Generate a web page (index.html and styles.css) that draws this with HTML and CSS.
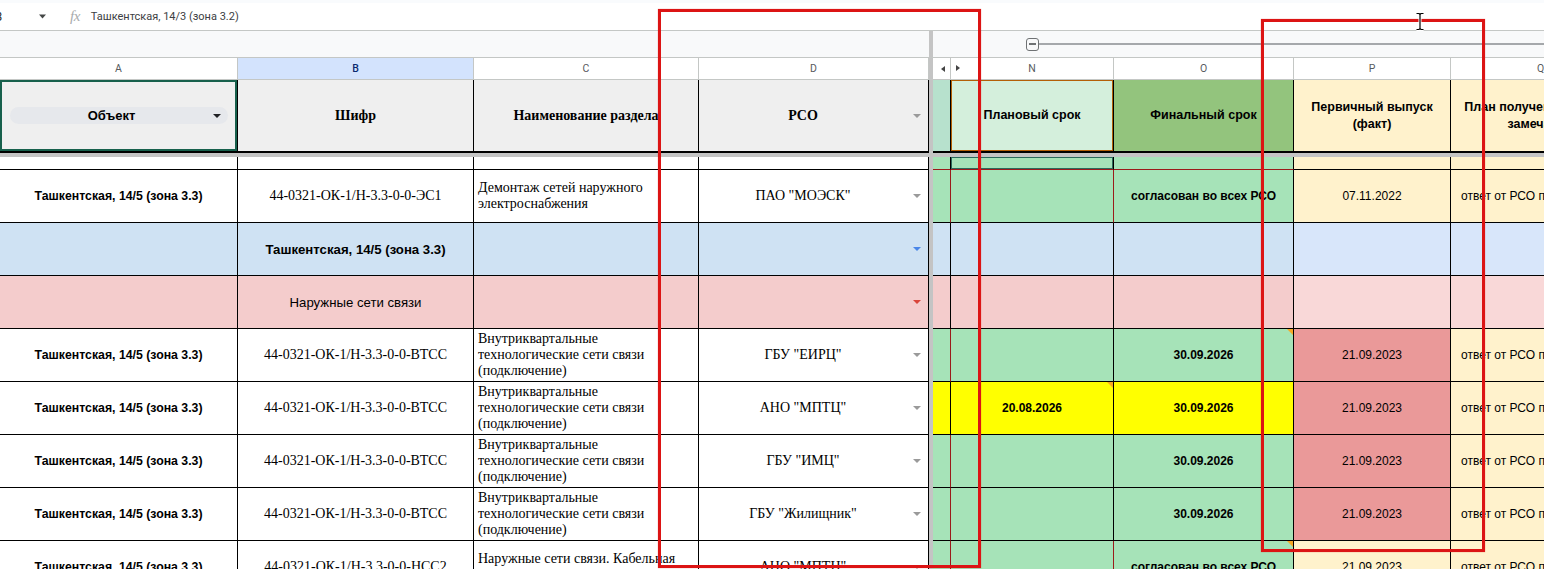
FILE: index.html
```html
<!DOCTYPE html>
<html lang="ru">
<head>
<meta charset="utf-8">
<title>Реестр согласований</title>
<link rel="stylesheet" href="styles.css">
</head>
<body>
<div class="top"></div>

<div class="fbar">
  <span class="name">B3</span>
  <svg class="caret" width="7" height="5" viewBox="0 0 7 5"><path d="M0 0.5h7L3.5 4.5z" fill="#444746"/></svg>
  <span class="fx">fx</span>
  <span class="ftext">Ташкентская, 14/3 (зона 3.2)</span>
</div>

<div class="sheet">
  <div class="grp">
    <div class="grp-left"></div>
    <div class="frz"></div>
    <div class="grp-right">
      <span class="collapse"><span class="minus"></span></span>
      <span class="grp-line"></span>
    </div>
  </div>

  <div class="row letters">
    <div class="l">A</div>
    <div class="l sel">B</div>
    <div class="l">C</div>
    <div class="l">D</div>
    <div class="frz"></div>
    <div class="l hid"><i class="tri-l"></i></div>
    <div class="l n-let"><i class="tri-r"></i>N</div>
    <div class="l">O</div>
    <div class="l">P</div>
    <div class="l">Q</div>
  </div>

  <div class="row head">
    <div class="c h h-a">
      <div class="chip"><span class="chip-t">Объект</span><i class="chip-dd"></i></div>
    </div>
    <div class="c h serif">Шифр</div>
    <div class="c h serif">Наименование раздела</div>
    <div class="c h serif d"><span class="dv">РСО</span><i class="dd"></i></div>
    <div class="frz"></div>
    <div class="c h-hid"></div>
    <div class="c h h-n">Плановый срок</div>
    <div class="c h h-o">Финальный срок</div>
    <div class="c h h-p">Первичный выпуск (факт)</div>
    <div class="c h h-q">План получения ответа /<br>замечаний</div>
  </div>

  <div class="frz-row"></div>

  <div class="row part">
    <div class="c"></div>
    <div class="c"></div>
    <div class="c"></div>
    <div class="c"></div>
    <div class="frz"></div>
    <div class="c g edge"></div>
    <div class="c g edge boxed"></div>
    <div class="c g edge"></div>
    <div class="c cream"></div>
    <div class="c cream"></div>
  </div>

  <div class="row">
    <div class="c a">Ташкентская, 14/5 (зона 3.3)</div>
    <div class="c b">44-0321-ОК-1/Н-3.3-0-0-ЭС1</div>
    <div class="c t">Демонтаж сетей наружного электроснабжения</div>
    <div class="c d"><span class="dv">ПАО "МОЭСК"</span><i class="dd"></i></div>
    <div class="frz"></div>
    <div class="c g redr"></div>
    <div class="c g redr"></div>
    <div class="c g bold">согласован во всех РСО</div>
    <div class="c cream">07.11.2022</div>
    <div class="c cream q">ответ от РСО получен</div>
  </div>

  <div class="row">
    <div class="c blue"></div>
    <div class="c blue a lg">Ташкентская, 14/5 (зона 3.3)</div>
    <div class="c blue"></div>
    <div class="c blue d"><span class="dv"></span><i class="dd dd-blue"></i></div>
    <div class="frz"></div>
    <div class="c blue"></div>
    <div class="c blue"></div>
    <div class="c blue"></div>
    <div class="c blue2"></div>
    <div class="c blue2"></div>
  </div>

  <div class="row">
    <div class="c pink"></div>
    <div class="c pink sect">Наружные сети связи</div>
    <div class="c pink"></div>
    <div class="c pink d"><span class="dv"></span><i class="dd dd-red"></i></div>
    <div class="frz"></div>
    <div class="c pink"></div>
    <div class="c pink"></div>
    <div class="c pink"></div>
    <div class="c pink2"></div>
    <div class="c pink2"></div>
  </div>

  <div class="row">
    <div class="c a">Ташкентская, 14/5 (зона 3.3)</div>
    <div class="c b">44-0321-ОК-1/Н-3.3-0-0-ВТСС</div>
    <div class="c t">Внутриквартальные технологические сети связи (подключение)</div>
    <div class="c d"><span class="dv">ГБУ "ЕИРЦ"</span><i class="dd"></i></div>
    <div class="frz"></div>
    <div class="c g redr"></div>
    <div class="c g"></div>
    <div class="c g bold note">30.09.2026</div>
    <div class="c red">21.09.2023</div>
    <div class="c cream q">ответ от РСО получен</div>
  </div>

  <div class="row">
    <div class="c a">Ташкентская, 14/5 (зона 3.3)</div>
    <div class="c b">44-0321-ОК-1/Н-3.3-0-0-ВТСС</div>
    <div class="c t">Внутриквартальные технологические сети связи (подключение)</div>
    <div class="c d"><span class="dv">АНО "МПТЦ"</span><i class="dd"></i></div>
    <div class="frz"></div>
    <div class="c y"></div>
    <div class="c y bold note">20.08.2026</div>
    <div class="c y bold">30.09.2026</div>
    <div class="c red">21.09.2023</div>
    <div class="c cream q">ответ от РСО получен</div>
  </div>

  <div class="row">
    <div class="c a">Ташкентская, 14/5 (зона 3.3)</div>
    <div class="c b">44-0321-ОК-1/Н-3.3-0-0-ВТСС</div>
    <div class="c t">Внутриквартальные технологические сети связи (подключение)</div>
    <div class="c d"><span class="dv">ГБУ "ИМЦ"</span><i class="dd"></i></div>
    <div class="frz"></div>
    <div class="c g redr"></div>
    <div class="c g"></div>
    <div class="c g bold">30.09.2026</div>
    <div class="c red">21.09.2023</div>
    <div class="c cream q">ответ от РСО получен</div>
  </div>

  <div class="row">
    <div class="c a">Ташкентская, 14/5 (зона 3.3)</div>
    <div class="c b">44-0321-ОК-1/Н-3.3-0-0-ВТСС</div>
    <div class="c t">Внутриквартальные технологические сети связи (подключение)</div>
    <div class="c d"><span class="dv">ГБУ "Жилищник"</span><i class="dd"></i></div>
    <div class="frz"></div>
    <div class="c g redr"></div>
    <div class="c g"></div>
    <div class="c g bold">30.09.2026</div>
    <div class="c red">21.09.2023</div>
    <div class="c cream q">ответ от РСО получен</div>
  </div>

  <div class="row">
    <div class="c a">Ташкентская, 14/5 (зона 3.3)</div>
    <div class="c b">44-0321-ОК-1/Н-3.3-0-0-НСС2</div>
    <div class="c t">Наружные сети связи. Кабельная канализация</div>
    <div class="c d"><span class="dv">АНО "МПТЦ"</span><i class="dd"></i></div>
    <div class="frz"></div>
    <div class="c g redr"></div>
    <div class="c g redr"></div>
    <div class="c g bold note">согласован во всех РСО</div>
    <div class="c cream">21.09.2023</div>
    <div class="c cream q">ответ от РСО получен</div>
  </div>
</div>

<div class="mark mark-1"></div>
<div class="mark mark-2"></div>

<svg class="ibeam" width="10" height="19" viewBox="0 0 10 19">
  <path d="M1.5 1.5h2.5l1 1 1-1h2.5M5 2.5v14M1.5 17.5h2.5l1-1 1 1h2.5" fill="none" stroke="#fff" stroke-width="3"/>
  <path d="M1.5 1.5h2.5l1 1 1-1h2.5M5 2.5v14M1.5 17.5h2.5l1-1 1 1h2.5" fill="none" stroke="#000" stroke-width="1.2"/>
</svg>
</body>
</html>
```

FILE: styles.css
```css
* {
  box-sizing: border-box;
  margin: 0;
  padding: 0;
}

:root {
  --cols: 238px 236px 225px 230px 4px 18px 163px 180px 157px 180px;
  --green: #a6e3b8;
  --line: #000;
}

body {
  width: 1544px;
  height: 569px;
  overflow: hidden;
  position: relative;
  background: #fff;
  font-family: "Liberation Sans", Arial, sans-serif;
  color: #000;
}

/* toolbar strip and formula bar */
.top {
  height: 3px;
  background: #f9fbfd;
}

.fbar {
  height: 28px;
  border-bottom: 1px solid #c4c7c5;
  display: flex;
  align-items: center;
  font-family: Roboto, "Liberation Sans", sans-serif;
  font-size: 11px;
  color: #3c4043;
  white-space: nowrap;
}

.name {
  margin-left: -12px;
  width: 16px;
  font-size: 12px;
  color: #1f1f1f;
}

.caret {
  margin-left: 35px;
}

.fx {
  margin-left: 24px;
  font-family: "Liberation Serif", serif;
  font-style: italic;
  font-size: 15px;
  color: #a8abad;
  letter-spacing: -0.5px;
}

.ftext {
  margin-left: 11px;
}

/* sheet grid */
.sheet {
  width: 1630px;
}

.grp,
.row {
  display: grid;
  grid-template-columns: var(--cols);
}

.row {
  height: 53px;
}

.grp {
  height: 27px;
  background: #f8f9fa;
  border-bottom: 1px solid #c4c7c5;
}

.grp-left {
  grid-column: 1 / 5;
}

.grp-right {
  grid-column: 6 / 11;
  display: flex;
  align-items: center;
  padding-left: 93px;
}

.collapse {
  width: 13px;
  height: 13px;
  border: 1.5px solid #6f7274;
  border-radius: 3px;
  display: flex;
  align-items: center;
  justify-content: center;
  flex: none;
}

.minus {
  width: 7px;
  height: 1.5px;
  background: #6f7274;
}

.grp-line {
  flex: 1;
  height: 1.5px;
  background: #a5a8ab;
}

.frz {
  background: #c4c4c4;
}

.frz-row {
  height: 4px;
  background: #c4c4c4;
}

/* column letters */
.row.letters {
  height: 22px;
  background: #fff;
  border-bottom: 1px solid #c4c7c5;
}

.l {
  border-right: 1px solid #c4c7c5;
  display: flex;
  align-items: center;
  justify-content: center;
  font-family: Roboto, "Liberation Sans", sans-serif;
  font-size: 10.5px;
  color: #575a5e;
  position: relative;
}

.l.sel {
  background: #d3e3fd;
  color: #0b2a6f;
  font-weight: 500;
}

.l.hid {
  justify-content: flex-end;
  padding-right: 5px;
}

.tri-l,
.tri-r {
  width: 0;
  height: 0;
  border-top: 3.5px solid transparent;
  border-bottom: 3.5px solid transparent;
}

.tri-l {
  border-right: 4px solid #444;
}

.tri-r {
  border-left: 4px solid #444;
  position: absolute;
  left: 5px;
  top: 7px;
}

/* cells */
.c {
  border-right: 1px solid var(--line);
  border-bottom: 1px solid var(--line);
  display: flex;
  align-items: center;
  justify-content: center;
  text-align: center;
  overflow: hidden;
  position: relative;
  font-size: 12px;
}

.row.head {
  height: 73px;
}

.head .c {
  border-bottom: 2px solid #000;
}

.h {
  background: #efefef;
  font-weight: bold;
  font-size: 12.5px;
  line-height: 17px;
  padding: 0 10px;
}

.serif {
  font-family: "Liberation Serif", "Times New Roman", serif;
  font-size: 14px;
}

.h.d {
  padding: 0;
}

.h-a {
  padding: 0 9px 0 10px;
  box-shadow: inset 0 0 0 2px #17604c;
}

.chip {
  width: 100%;
  height: 17px;
  border-radius: 9px;
  background: #e6e8ec;
  display: flex;
  align-items: center;
}

.chip-t {
  flex: 1;
  text-align: center;
  font-size: 13px;
  font-weight: bold;
}

.chip-dd {
  width: 0;
  height: 0;
  border-left: 4px solid transparent;
  border-right: 4px solid transparent;
  border-top: 4.5px solid #202124;
  margin-right: 7px;
}

.h-hid {
  background: #b7e1cd;
}

.h-n {
  background: #d4efdc;
  box-shadow: inset 0 0 0 1px #b45f06;
}

.h-o {
  background: #93c47d;
}

.h-p,
.h-q {
  background: #fff2cc;
}

.h-q {
  padding: 0;
  white-space: nowrap;
}

.row.part {
  height: 13px;
}

.a {
  font-weight: bold;
  font-size: 12.3px;
}

.a.lg {
  font-size: 13.2px;
}

.b,
.t,
.d {
  font-family: "Liberation Serif", "Times New Roman", serif;
  font-size: 14px;
}

.t {
  justify-content: flex-start;
  text-align: left;
  padding: 0 4px;
  line-height: 16px;
}

.d {
  justify-content: space-between;
}

.dv {
  flex: 1;
  text-align: center;
}

.dd {
  width: 0;
  height: 0;
  border-left: 4px solid transparent;
  border-right: 4px solid transparent;
  border-top: 4px solid #9a9a9a;
  margin: 0 7px 0 6px;
  flex: none;
}

.dd-blue {
  border-top-color: #4a86e8;
}

.dd-red {
  border-top-color: #d9453a;
}

.sect {
  font-size: 13.2px;
}

.bold {
  font-weight: bold;
}

.q {
  justify-content: flex-start;
  padding-left: 10px;
  white-space: nowrap;
}

/* fills */
.g {
  background: var(--green);
}

.y {
  background: #ffff00;
}

.blue {
  background: #cfe2f3;
}

.blue2 {
  background: #d8e6fa;
}

.pink {
  background: #f4cccc;
}

.pink2 {
  background: #f9d8d8;
}

.cream {
  background: #fff2cc;
}

.red {
  background: #ea9999;
}

.edge {
  border-bottom-color: #9b1b1b;
}

.boxed {
  box-shadow: inset 0 0 0 1px #2c6a5b;
}

.redr {
  border-right-color: #9b1b1b;
}

/* comment marker in a cell corner */
.note::after {
  content: "";
  position: absolute;
  top: 0;
  right: 0;
  border-top: 6px solid #f6a823;
  border-left: 6px solid transparent;
}

/* review highlights drawn over the sheet */
.mark {
  position: absolute;
  border: 3px solid #dc1414;
  box-shadow: 0 0 1px rgba(220, 20, 20, 0.5);
  pointer-events: none;
}

.mark-1 {
  left: 658px;
  top: 9px;
  width: 323px;
  height: 559px;
}

.mark-2 {
  left: 1261px;
  top: 19px;
  width: 224px;
  height: 533px;
}

.ibeam {
  position: absolute;
  left: 1415px;
  top: 12px;
}
```
